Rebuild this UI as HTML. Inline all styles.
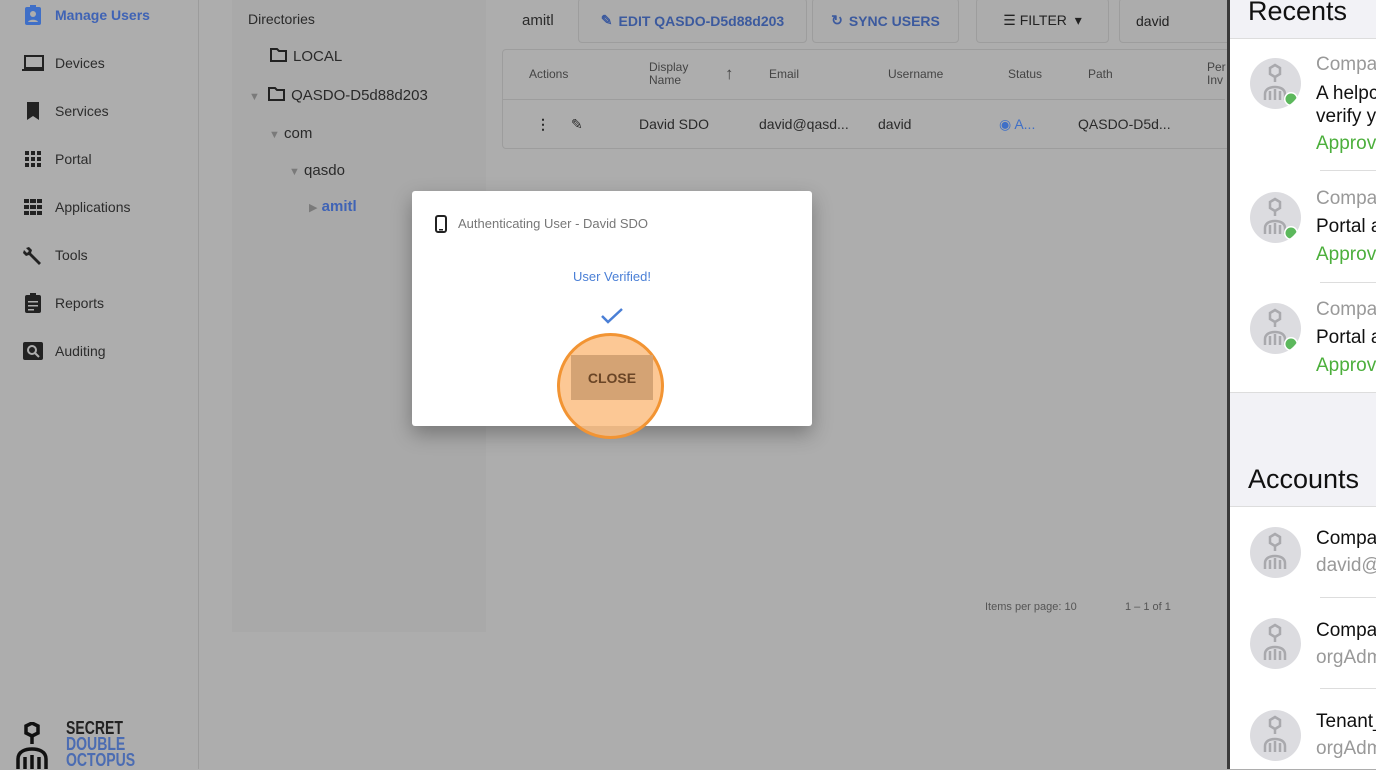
<!DOCTYPE html>
<html><head><meta charset="utf-8"><style>
*{box-sizing:border-box;margin:0;padding:0}
body{width:1376px;height:769px;overflow:hidden;background:#adadad;font-family:"Liberation Sans",sans-serif;position:relative;color:#2a2a2a}
.abs{position:absolute}
.side{left:0;top:0;width:199px;height:769px;background:#adadad;border-right:1px solid #9c9c9c}
.nav{position:absolute;left:22px;font-size:14px;color:#2c2c2c;display:flex;align-items:center}
.nav .ic{width:22px;height:20px;margin-right:11px;display:flex;align-items:center;justify-content:center}
.dir{left:232px;top:0;width:254px;height:632px;background:#a9a9a9}
.t{position:absolute;font-size:15px;color:#2a2a2a;white-space:nowrap}
.tri{color:#7a7a7a;font-size:11px}
.btn{position:absolute;top:-2px;height:45px;border:1px solid #9d9d9d;border-radius:4px;background:#acacac;font-size:14px;color:#3c5a9e;font-weight:bold;display:flex;align-items:center;justify-content:center}
.tbl{left:502px;top:49px;width:730px;height:100px;border:1px solid #9d9d9d;border-radius:4px}
.th{position:absolute;font-size:12px;color:#444;top:67px}
.td{position:absolute;font-size:14px;color:#2a2a2a;top:116px}
.right{left:1227px;top:0;width:149px;height:769px;background:#fff;border-left:3px solid #3a3a3a}
.gray{position:absolute;left:0;width:149px;background:#f2f2f6}
.av{position:absolute;left:20px;width:51px;height:51px;border-radius:50%;background:#dcdce0}
.rt{position:absolute;left:86px;font-size:19px;white-space:nowrap;font-family:"Liberation Sans",sans-serif}
.sep{position:absolute;left:90px;right:0;height:1px;background:#ddd}
</style></head><body>
<svg width="0" height="0" style="position:absolute"><defs><g id="oc"><path d="M20 10l5-3 5 3v6l-5 3-5-3z" fill="none" stroke="#a9a9ad" stroke-width="2.5"/><path d="M25 19v5M15 42v-6c0-5 5-7 10-7s10 2 10 7v6M20 42v-9M25 42v-11M30 42v-9" fill="none" stroke="#a9a9ad" stroke-width="2.5"/></g></defs></svg>
<div class="abs side">
 <div class="nav" style="top:5px;color:#3f63b5;font-weight:bold"><span class="ic"><svg width="18" height="20" viewBox="0 0 18 20"><rect x="1" y="2" width="16" height="18" rx="2" fill="#3f6fc7"/><circle cx="9" cy="9" r="3" fill="#adadad"/><path d="M4 17c1-3 9-3 10 0z" fill="#adadad"/><rect x="6" y="0" width="6" height="3" fill="#3f6fc7"/></svg></span>Manage Users</div>
 <div class="nav" style="top:53px"><span class="ic"><svg width="24" height="18"><rect x="3" y="2" width="18" height="12" fill="none" stroke="#222" stroke-width="2"/><rect x="0" y="15" width="24" height="2" fill="#222"/></svg></span>Devices</div>
 <div class="nav" style="top:101px"><span class="ic"><svg width="16" height="20"><path d="M2 1h12v18l-6-4-6 4z" fill="#222"/></svg></span>Services</div>
 <div class="nav" style="top:149px"><span class="ic"><svg width="18" height="18" fill="#222"><rect x="1" y="1" width="4" height="4"/><rect x="7" y="1" width="4" height="4"/><rect x="13" y="1" width="4" height="4"/><rect x="1" y="7" width="4" height="4"/><rect x="7" y="7" width="4" height="4"/><rect x="13" y="7" width="4" height="4"/><rect x="1" y="13" width="4" height="4"/><rect x="7" y="13" width="4" height="4"/><rect x="13" y="13" width="4" height="4"/></svg></span>Portal</div>
 <div class="nav" style="top:197px"><span class="ic"><svg width="18" height="16" fill="#222"><rect x="0" y="0" width="5" height="4"/><rect x="6" y="0" width="6" height="4"/><rect x="13" y="0" width="5" height="4"/><rect x="0" y="6" width="5" height="4"/><rect x="6" y="6" width="6" height="4"/><rect x="13" y="6" width="5" height="4"/><rect x="0" y="12" width="5" height="4"/><rect x="6" y="12" width="6" height="4"/><rect x="13" y="12" width="5" height="4"/></svg></span>Applications</div>
 <div class="nav" style="top:245px"><span class="ic"><svg width="20" height="20"><path d="M3 3l3-1 3 3-1 3 10 10-2 2-10-10-3 1-3-3 1-3 3 3 2-2z" fill="#222"/></svg></span>Tools</div>
 <div class="nav" style="top:293px"><span class="ic"><svg width="18" height="20"><rect x="1" y="2" width="16" height="18" rx="2" fill="#222"/><rect x="6" y="0" width="6" height="4" fill="#222"/><rect x="4" y="8" width="10" height="1.5" fill="#adadad"/><rect x="4" y="12" width="10" height="1.5" fill="#adadad"/><rect x="4" y="16" width="6" height="1.5" fill="#adadad"/></svg></span>Reports</div>
 <div class="nav" style="top:341px"><span class="ic"><svg width="20" height="18"><rect x="0" y="0" width="20" height="18" rx="2" fill="#222"/><circle cx="9" cy="8" r="4" fill="none" stroke="#adadad" stroke-width="2"/><path d="M12 11l4 4" stroke="#adadad" stroke-width="2"/></svg></span>Auditing</div>
 <svg class="abs" style="left:14px;top:722px" width="40" height="47"><path d="M12 4l6-3 6 3v7l-6 3-6-3z" fill="none" stroke="#111" stroke-width="3.5"/><path d="M18 14v8M4 47v-10c0-8 8-10 14-10s14 2 14 10v10M11 47v-12M18 47v-14M25 47v-12" fill="none" stroke="#111" stroke-width="3.5"/></svg>
 <div class="abs" style="left:66px;top:720px;font-size:18px;line-height:16px;font-weight:bold;transform:scaleX(.78);transform-origin:left"><div style="color:#222">SECRET</div><div style="color:#4b6cb2">DOUBLE</div><div style="color:#4b6cb2">OCTOPUS</div></div>
</div>
<div class="abs dir"></div>
<div class="t" style="left:248px;top:11px;font-size:14px">Directories</div>
<div class="t" style="left:270px;top:48px"><svg width="17" height="14" style="vertical-align:-1px;margin-right:6px"><path d="M1 1h6l2 2h7v10H1z" fill="none" stroke="#222" stroke-width="2"/></svg>LOCAL</div>
<div class="t" style="left:249px;top:87px"><span class="tri">▼</span> <svg width="17" height="14" style="vertical-align:-1px;margin:0 6px 0 4px"><path d="M1 1h6l2 2h7v10H1z" fill="none" stroke="#222" stroke-width="2"/></svg>QASDO-D5d88d203</div>
<div class="t" style="left:269px;top:125px"><span class="tri">▼</span> com</div>
<div class="t" style="left:289px;top:162px"><span class="tri">▼</span> qasdo</div>
<div class="t" style="left:309px;top:198px"><span class="tri">▶</span> <span style="color:#3f63b5;font-weight:bold">amitl</span></div>

<div class="t" style="left:522px;top:12px">amitl</div>
<div class="btn" style="left:578px;width:229px"><span style="margin-right:6px">✎</span>EDIT QASDO-D5d88d203</div>
<div class="btn" style="left:812px;width:147px"><span style="margin-right:6px">↻</span>SYNC USERS</div>
<div class="btn" style="left:976px;width:133px;color:#222;font-weight:normal">☰&nbsp;FILTER&nbsp;&nbsp;▾</div>
<div class="btn" style="left:1119px;width:120px;color:#222;font-weight:normal;justify-content:flex-start;padding-left:16px">david</div>
<div class="abs tbl"></div>
<div class="abs" style="left:503px;top:99px;width:722px;height:1px;background:#9d9d9d"></div>
<div class="th" style="left:529px">Actions</div>
<div class="th" style="left:649px;top:61px;line-height:13px">Display<br>Name</div>
<div class="th" style="left:725px;top:64px;font-size:17px">↑</div>
<div class="th" style="left:769px">Email</div>
<div class="th" style="left:888px">Username</div>
<div class="th" style="left:1008px">Status</div>
<div class="th" style="left:1088px">Path</div>
<div class="th" style="left:1207px;top:61px;line-height:13px">Per<br>Inv</div>
<div class="td" style="left:536px;font-weight:bold">⋮</div>
<div class="td" style="left:571px">✎</div>
<div class="td" style="left:639px">David SDO</div>
<div class="td" style="left:759px">david@qasd...</div>
<div class="td" style="left:878px">david</div>
<div class="td" style="left:999px;color:#3f6fc7">◉ A...</div>
<div class="td" style="left:1078px">QASDO-D5d...</div>
<div class="t" style="left:985px;top:601px;font-size:11px;color:#555">Items per page: 10</div>
<div class="t" style="left:1125px;top:601px;font-size:11px;color:#555">1 – 1 of 1</div>

<div class="abs" style="left:412px;top:191px;width:400px;height:235px;background:#fff;border-radius:3px;box-shadow:0 8px 20px rgba(0,0,0,.3)">
 <svg class="abs" style="left:23px;top:24px" width="12" height="18"><rect x="1" y="1" width="10" height="16" rx="2" fill="none" stroke="#222" stroke-width="2"/><rect x="4" y="14" width="4" height="1.5" fill="#222"/></svg>
 <div class="abs" style="left:46px;top:25px;font-size:13px;color:#777">Authenticating User - David SDO</div>
 <div class="abs" style="left:0;width:400px;top:78px;text-align:center;font-size:13px;color:#4a7fd6">User Verified!</div>
 <svg class="abs" style="left:188px;top:116px" width="24" height="18"><path d="M2 9l6 6L22 2" fill="none" stroke="#4a7fd6" stroke-width="2.5"/></svg>
</div>
<div class="abs" style="left:557px;top:333px;width:107px;height:106px;border-radius:50%;background:rgba(251,190,130,.85);border:3px solid #f29433"></div>
<div class="abs" style="left:571px;top:355px;width:82px;height:45px;background:#d4a374;font-size:14px;font-weight:bold;color:#6a4526;display:flex;align-items:center;justify-content:center">CLOSE</div>

<div class="abs right">
 <div class="gray" style="top:0;height:39px;border-bottom:1px solid #ddd"></div>
 <div class="rt" style="left:18px;top:-4px;font-size:27px;color:#111">Recents</div>
 <div class="gray" style="top:392px;height:115px;border-top:1px solid #ddd;border-bottom:1px solid #ddd"></div>
 <div class="rt" style="left:18px;top:464px;font-size:27px;color:#111">Accounts</div>

 <svg class="av" style="top:58px" viewBox="0 0 51 51"><use href="#oc"/><circle cx="41" cy="41" r="7" fill="#fff"/><circle cx="41" cy="41" r="5.5" fill="#5cb85c"/></svg><div class="rt" style="top:54px;color:#999">Compa</div><div class="rt" style="top:82px;line-height:23px;color:#111">A helpc<br>verify y</div><div class="rt" style="top:133px;color:#4caf3c">Approv</div>
 <div class="sep" style="top:170px"></div>
 <svg class="av" style="top:192px" viewBox="0 0 51 51"><use href="#oc"/><circle cx="41" cy="41" r="7" fill="#fff"/><circle cx="41" cy="41" r="5.5" fill="#5cb85c"/></svg><div class="rt" style="top:188px;color:#999">Compa</div><div class="rt" style="top:216px;color:#111">Portal a</div><div class="rt" style="top:244px;color:#4caf3c">Approv</div>
 <div class="sep" style="top:282px"></div>
 <svg class="av" style="top:303px" viewBox="0 0 51 51"><use href="#oc"/><circle cx="41" cy="41" r="7" fill="#fff"/><circle cx="41" cy="41" r="5.5" fill="#5cb85c"/></svg><div class="rt" style="top:299px;color:#999">Compa</div><div class="rt" style="top:327px;color:#111">Portal a</div><div class="rt" style="top:355px;color:#4caf3c">Approv</div>

 <svg class="av" style="top:527px" viewBox="0 0 51 51"><use href="#oc"/></svg><div class="rt" style="top:528px;color:#111">Compa</div><div class="rt" style="top:555px;color:#999">david@</div>
 <div class="sep" style="top:597px"></div>
 <svg class="av" style="top:618px" viewBox="0 0 51 51"><use href="#oc"/></svg><div class="rt" style="top:620px;color:#111">Compa</div><div class="rt" style="top:647px;color:#999">orgAdm</div>
 <div class="sep" style="top:688px"></div>
 <svg class="av" style="top:710px" viewBox="0 0 51 51"><use href="#oc"/></svg><div class="rt" style="top:711px;color:#111">Tenant_</div><div class="rt" style="top:738px;color:#999">orgAdm</div>
</div>
</body></html>
